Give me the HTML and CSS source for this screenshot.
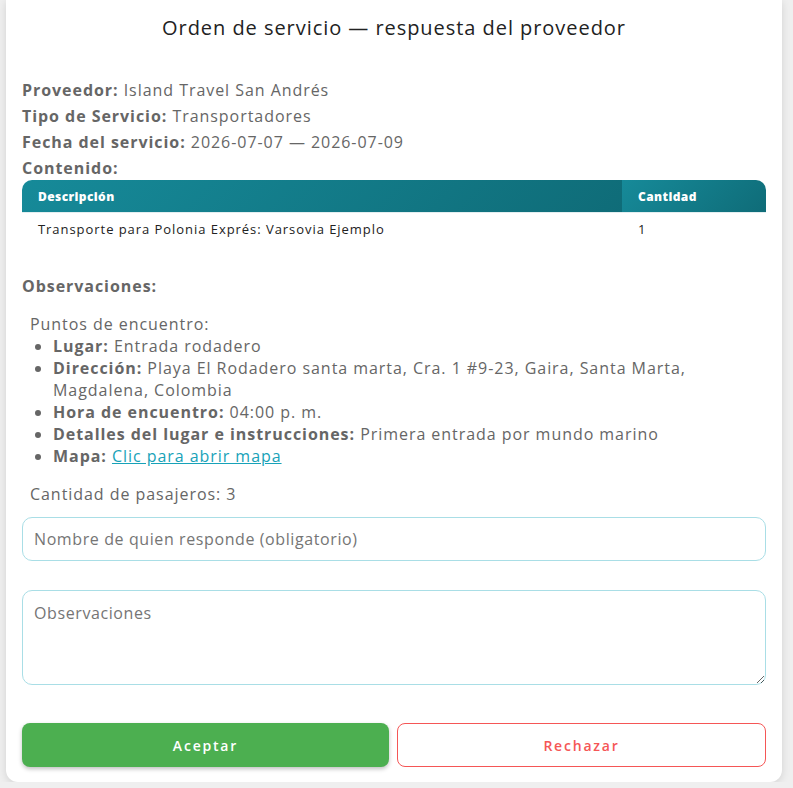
FILE: index.html
```html
<!DOCTYPE html>
<html lang="es">
<head>
  <meta charset="UTF-8">
  <meta name="viewport" content="width=device-width, initial-scale=1.0">
  <title>Orden de servicio</title>
  <link rel="stylesheet" href="styles.css">
</head>
<body>
  <div class="card">
    <h2 class="title">Orden de servicio — respuesta del proveedor</h2>

    <p class="info"><strong>Proveedor:</strong> Island Travel San Andrés</p>
    <p class="info"><strong>Tipo de Servicio:</strong> Transportadores</p>
    <p class="info"><strong>Fecha del servicio:</strong> 2026-07-07 — 2026-07-09</p>
    <p class="info info-last"><strong>Contenido:</strong></p>

    <table class="items">
      <thead>
        <tr>
          <th class="col-desc">Descripción</th>
          <th class="col-qty">Cantidad</th>
        </tr>
      </thead>
      <tbody>
        <tr>
          <td>Transporte para Polonia Exprés: Varsovia Ejemplo</td>
          <td>1</td>
        </tr>
      </tbody>
    </table>

    <p class="obs-label"><strong>Observaciones:</strong></p>
    <div class="obs">
      <div>Puntos de encuentro:</div>
      <ul>
        <li><strong>Lugar:</strong> Entrada rodadero</li>
        <li><strong>Dirección:</strong> Playa El Rodadero santa marta, Cra. 1 #9-23, Gaira, Santa Marta, Magdalena, Colombia</li>
        <li><strong>Hora de encuentro:</strong> 04:00 p. m.</li>
        <li><strong>Detalles del lugar e instrucciones:</strong> Primera entrada por mundo marino</li>
        <li><strong>Mapa:</strong> <a href="#">Clic para abrir mapa</a></li>
      </ul>
      <div class="pax">Cantidad de pasajeros: 3</div>
    </div>

    <input type="text" class="field" placeholder="Nombre de quien responde (obligatorio)">
    <textarea class="field field-area" placeholder="Observaciones"></textarea>

    <div class="actions">
      <button class="btn btn-accept">Aceptar</button>
      <button class="btn btn-reject">Rechazar</button>
    </div>
  </div>
</body>
</html>
```

FILE: styles.css
```css
body {
  margin: 0;
  background: #efefef;
  font-family: "Open Sans", sans-serif;
  letter-spacing: 0.95px;
  color: #666;
}
.card {
  width: 744px;
  margin: 0 0 0 6px;
  padding: 14px 16px 15px;
  background: #fff;
  border-radius: 0 0 12px 12px;
  box-shadow: 0 2px 8px rgba(0, 0, 0, 0.12);
}
.title {
  margin: 0 0 36px;
  font-size: 20px;
  font-weight: 500;
  line-height: 28px;
  color: #222;
  text-align: center;
}
.info {
  margin: 0 0 2px;
  font-size: 16px;
  line-height: 24px;
}
.info-last { margin-bottom: 0; }

/* tabla de contenido */
.items {
  width: 100%;
  border-collapse: separate;
  border-spacing: 0;
}
.items th {
  height: 32px;
  padding: 0 16px;
  font-size: 12px;
  font-weight: 800;
  letter-spacing: 0.4px;
  color: #fff;
  text-align: left;
  background: linear-gradient(135deg, #168a99, #0f6c78);
}
.items .col-desc { width: 568px; border-top-left-radius: 10px; }
.items .col-qty { border-top-right-radius: 10px; }
.items td {
  height: 31px;
  padding: 0 16px;
  font-size: 13px;
  color: #222;
  border-top: 1px solid #e3eef0;
}

.obs-label {
  margin: 30px 0 15px;
  font-size: 16px;
  line-height: 24px;
}
.obs {
  padding-left: 8px;
  font-size: 16px;
  line-height: 22px;
}
.obs ul {
  margin: 0;
  padding-left: 23px;
}
.obs a { color: #17a2b8; }
.pax { margin-top: 16px; }

.field {
  display: block;
  box-sizing: border-box;
  width: 100%;
  margin: 12px 0 0;
  padding: 0 11px;
  height: 44px;
  border: 1px solid #a9dee6;
  border-radius: 10px;
  font-family: inherit;
  font-size: 16px;
  letter-spacing: 0.6px;
  color: #333;
}
.field::placeholder { color: #757575; }
.field-area {
  height: 95px;
  margin-top: 29px;
  padding: 11px;
  line-height: 22px;
}

.actions {
  display: flex;
  gap: 8px;
  margin-top: 38px;
}
.btn {
  flex: 1;
  height: 44px;
  border-radius: 8px;
  font-family: inherit;
  font-size: 14px;
  font-weight: 600;
  letter-spacing: 1.8px;
  cursor: pointer;
}
.btn-accept {
  background: #4caf50;
  color: #fff;
  border: none;
  box-shadow: 0 2px 4px rgba(0, 0, 0, 0.25);
}
.btn-reject {
  background: #fff;
  color: #f55656;
  border: 1px solid #f55656;
}
```
